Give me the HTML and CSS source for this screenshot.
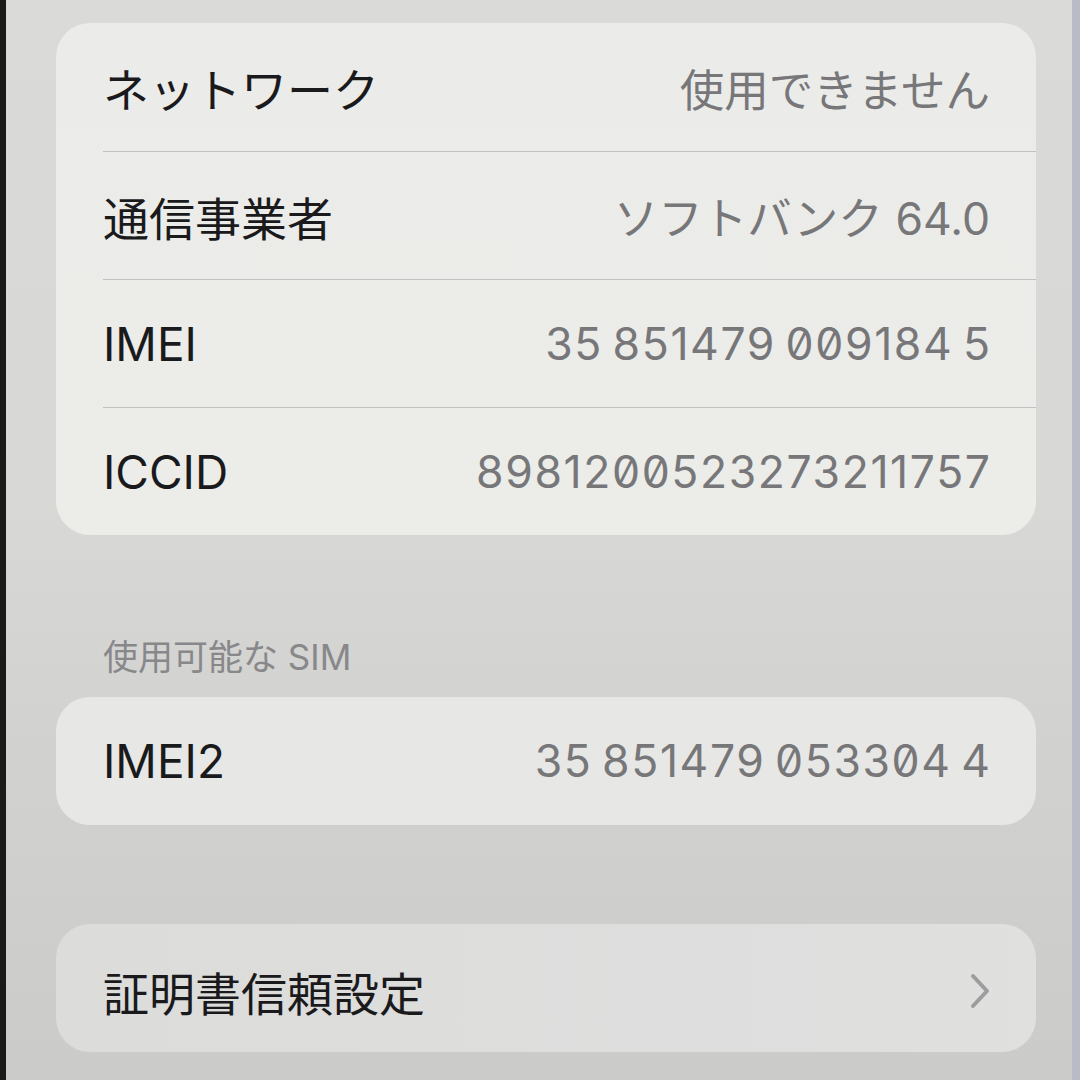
FILE: index.html
```html
<!DOCTYPE html>
<html lang="ja">
<head>
<meta charset="utf-8">
<title>情報</title>
<link rel="stylesheet" href="styles.css">
</head>
<body>
<div class="screen">
  <section class="card card-main">
    <div class="row">
      <span class="label">ネットワーク</span>
      <span class="value">使用できません</span>
    </div>
    <div class="row">
      <span class="label">通信事業者</span>
      <span class="value">ソフトバンク 64.0</span>
    </div>
    <div class="row">
      <span class="label">IMEI</span>
      <span class="value num">35 851479 009184 5</span>
    </div>
    <div class="row">
      <span class="label">ICCID</span>
      <span class="value num">8981200523273211757</span>
    </div>
  </section>

  <h2 class="section-header">使用可能な SIM</h2>

  <section class="card card-sim">
    <div class="row">
      <span class="label">IMEI2</span>
      <span class="value num">35 851479 053304 4</span>
    </div>
  </section>

  <section class="card card-cert">
    <div class="row">
      <span class="label">証明書信頼設定</span>
      <svg class="chevron" width="20" height="36" viewBox="0 0 20 36" aria-hidden="true">
        <polyline points="3,3 17,18 3,33" fill="none" stroke="#9d9d9f" stroke-width="4" stroke-linecap="round" stroke-linejoin="round"/>
      </svg>
    </div>
  </section>
</div>
</body>
</html>
```

FILE: styles.css
```css
html, body {
  margin: 0;
  padding: 0;
  height: 100%;
}

body {
  background: #d4d4d2;
  font-family: "Inter", "Noto Sans CJK JP", sans-serif;
  overflow: hidden;
}

.screen {
  box-sizing: border-box;
  width: 1080px;
  height: 1080px;
  padding: 23px 36px 0 50px;
  border-left: 6px solid #1b1a1a;
  border-right: 8px solid #b9bcc6;
  background: linear-gradient(180deg, #dadad8 0%, #d8d8d6 45%, #d0d0ce 75%, #cbcbca 100%);
}

.card {
  border-radius: 34px;
  overflow: hidden;
}

.card-main {
  background: linear-gradient(180deg, #ebebe9 0%, #ecece9 100%);
}

.card-sim {
  background: #e7e7e5;
}

.card-cert {
  margin-top: 99px;
  background: linear-gradient(90deg, #dcdcda 0%, #dedede 70%, #e0e0de 100%);
}

.row {
  height: 128px;
  margin-left: 47px;
  padding-right: 46px;
  display: flex;
  align-items: center;
  justify-content: space-between;
  border-top: 1.5px solid #c1c1c1;
  box-sizing: border-box;
}

.row:first-child {
  border-top: none;
}

.label {
  font-size: 46px;
  color: #1a1a1c;
  letter-spacing: 0;
}

.value {
  font-size: 44.5px;
  color: #77777a;
}

.num {
  font-feature-settings: "zero" 1;
  letter-spacing: 1.6px;
  word-spacing: -4.5px;
  margin-right: -1.6px;
}

.section-header {
  margin: 0;
  padding: 102px 0 20px 47px;
  font-size: 35px;
  line-height: 40px;
  font-weight: 400;
  color: #88888b;
}

.card-cert .row {
  padding-top: 6px;
}

.chevron {
  display: block;
}
```
